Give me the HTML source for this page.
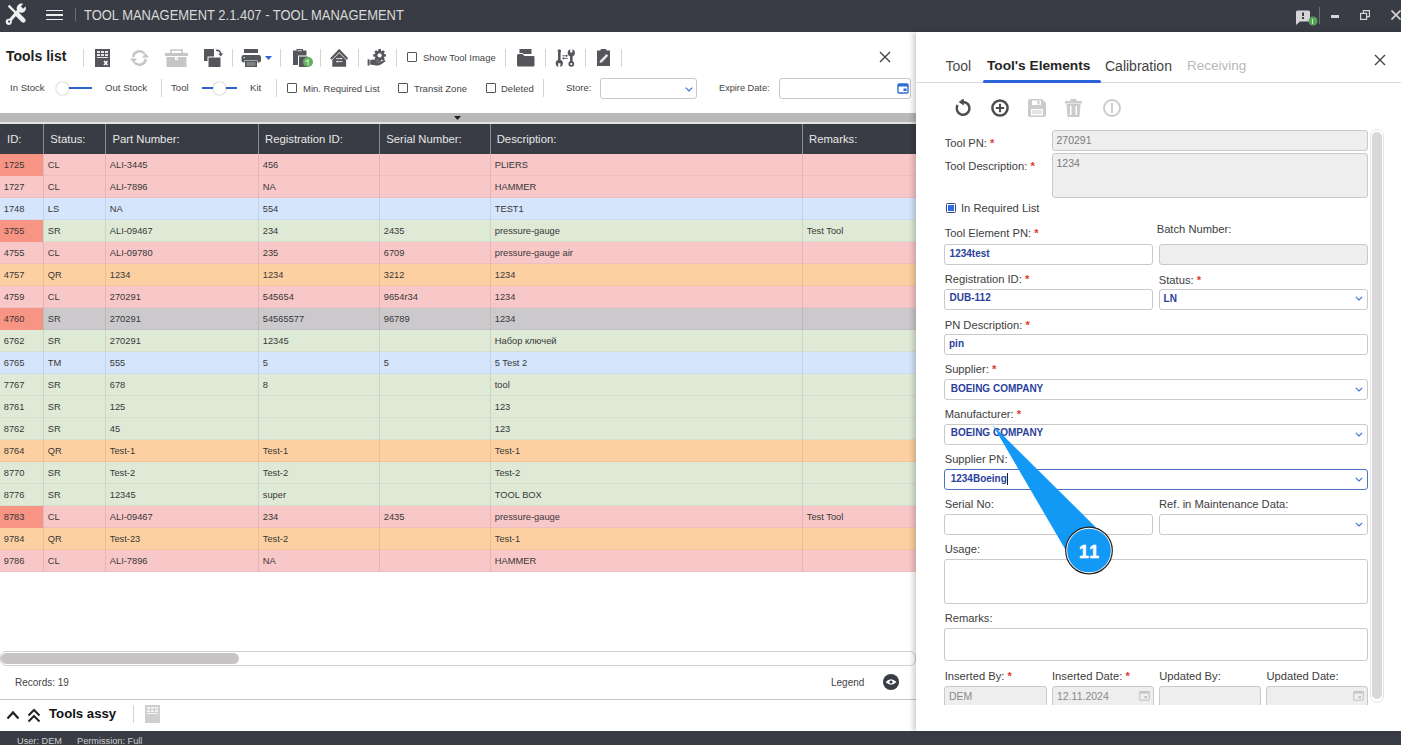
<!DOCTYPE html>
<html><head><meta charset="utf-8">
<style>
*{box-sizing:border-box;margin:0;padding:0}
html,body{width:1401px;height:745px;overflow:hidden;background:#fff;font-family:"Liberation Sans",sans-serif;color:#333}
.a{position:absolute;white-space:nowrap;line-height:1}
#title{position:absolute;left:0;top:0;width:1401px;height:32px;background:#393c44}
#status{position:absolute;left:0;top:731px;width:1401px;height:14px;background:#393c44}
.sep{position:absolute;width:1px;background:#d4d4d4}
.cb{position:absolute;width:10px;height:10px;border:1px solid #555;border-radius:1px;background:#fff}
/* table */
#grid{position:absolute;left:0;top:124px;width:916px}
.hdr{position:absolute;left:0;top:0;width:916px;height:30px;background:#393c44}
.hc{position:absolute;top:0;height:30px;line-height:30px;color:#e8e8e8;font-size:11.3px;padding-left:7px}
.hs{position:absolute;top:0;width:1px;height:30px;background:#8a8d93}
.row{position:absolute;left:0;width:916px;height:22px;border-bottom:1px solid rgba(0,0,0,0.04)}
.c{position:absolute;top:0;height:22px;line-height:22px;font-size:9.8px;color:#383838;padding-left:5px;white-space:nowrap;transform:scaleX(0.95);transform-origin:0 0}
.vs{position:absolute;top:0;width:1px;height:22px;background:rgba(0,0,0,0.08)}
.pk{background:#f8c7c7}.bl{background:#d5e5fb}.gr{background:#dee9d6}.or{background:#fdd0a1}.gy{background:#cbc9cc}
.sal{background:#f79484}
/* panel */
#panel{position:absolute;left:916px;top:32px;width:485px;height:699px;background:#fff;box-shadow:-3px 0 5px rgba(0,0,0,0.18)}
.lbl{position:absolute;font-size:11px;color:#3a3a3a;white-space:nowrap;line-height:1}
.req{color:#e03a2a;font-weight:bold}
.inp{position:absolute;height:20px;border:1px solid #c6c6c6;border-radius:3px;background:#fff}
.dis{background:#eeeeee}
.val{position:absolute;font-size:10px;font-weight:bold;color:#2b3f9c;white-space:nowrap;line-height:1}
.chev{position:absolute;width:8px;height:5px}
</style></head><body>

<!-- TITLE BAR -->
<div id="title">
  <svg class="a" style="left:0;top:0" width="32" height="32" viewBox="0 0 32 32">
    <path d="M8.6 5.6 L15.5 12.5" stroke="#f0f0f0" stroke-width="2.4" stroke-linecap="butt"/>
    <path d="M16.5 13.5 L23.3 20.3" stroke="#f0f0f0" stroke-width="4.6" stroke-linecap="round"/>
    <path d="M9 21.5 L19.5 9.5" stroke="#f0f0f0" stroke-width="3.2"/>
    <circle cx="8.8" cy="21.8" r="3.1" fill="#f0f0f0"/>
    <circle cx="9.1" cy="21.6" r="1.1" fill="#393c44"/>
    <circle cx="21.3" cy="8.2" r="4.6" fill="#f0f0f0"/>
    <path d="M22 7.5 L26.5 3" stroke="#393c44" stroke-width="3.2"/>
  </svg>
  <div class="a" style="left:46px;top:9.5px;width:17px;height:1.6px;background:#eee"></div>
  <div class="a" style="left:46px;top:14px;width:17px;height:1.6px;background:#eee"></div>
  <div class="a" style="left:46px;top:18.6px;width:17px;height:1.6px;background:#eee"></div>
  <div class="a" style="left:75px;top:8px;width:1px;height:13px;background:#6a6d73"></div>
  <div class="a" style="left:84px;top:8.1px;font-size:14.2px;color:#d8d8d8;transform:scaleX(0.913);transform-origin:0 0">TOOL MANAGEMENT 2.1.407 - TOOL MANAGEMENT</div>
  <!-- right icons -->
  <svg class="a" style="left:1295px;top:9px" width="24" height="18" viewBox="0 0 24 18">
    <path d="M2.5 1.5 h11 q1.5 0 1.5 1.5 v8 q0 1.5 -1.5 1.5 h-8.5 l-4 3.5 v-13 q0 -1.5 1.5 -1.5 z" fill="#d8d3d6"/>
    <rect x="7" y="3.5" width="2" height="3.5" fill="#393c44"/><rect x="7" y="8" width="2" height="2" fill="#393c44"/>
    <circle cx="18" cy="12" r="4.5" fill="#57a457"/>
    <path d="M17.5 10 v5" stroke="#c9e7c9" stroke-width="1"/>
  </svg>
  <div class="a" style="left:1319px;top:7px;width:1px;height:17px;background:#6a6d73"></div>
  <div class="a" style="left:1331px;top:15px;width:8px;height:2.5px;background:#d6d6d6"></div>
  <svg class="a" style="left:1360px;top:10px" width="10" height="10" viewBox="0 0 10 10">
    <rect x="0.6" y="3.4" width="6" height="6" fill="none" stroke="#d6d6d6" stroke-width="1.2"/>
    <path d="M3.4 3.4 V0.6 H9.4 V6.6 H6.6" fill="none" stroke="#d6d6d6" stroke-width="1.2"/>
  </svg>
  <svg class="a" style="left:1391px;top:10px" width="10" height="10" viewBox="0 0 10 10">
    <path d="M0.5 0.5 L9.5 9.5 M9.5 0.5 L0.5 9.5" stroke="#d6d6d6" stroke-width="1.6"/>
  </svg>
</div>

<!-- TOOLBAR -->
<div class="a" style="left:6px;top:49px;font-size:14px;font-weight:bold;color:#222">Tools list</div>
<div class="sep" style="left:83px;top:49px;height:18px"></div>


<!-- toolbar row1 icons -->
<svg class="a" style="left:95px;top:49px" width="15" height="18" viewBox="0 0 15 18">
  <rect x="0" y="0" width="15" height="18" fill="#55565c"/>
  <g fill="#e6e6e8"><rect x="2" y="2" width="3" height="2"/><rect x="6" y="2" width="3" height="2"/><rect x="10" y="2" width="3" height="2"/>
  <rect x="2" y="5" width="3" height="2"/><rect x="6" y="5" width="3" height="2"/><rect x="10" y="5" width="3" height="2"/>
  <rect x="2" y="8" width="11" height="1"/></g>
  <path d="M9 12 L12.5 16 M12.5 12 L9 16" stroke="#fff" stroke-width="1.5"/>
</svg>
<svg class="a" style="left:129px;top:49px" width="21" height="18" viewBox="0 0 21 18">
  <path d="M4.2 8 A6.5 6.5 0 0 1 15.5 4.5" fill="none" stroke="#c6c6c8" stroke-width="2.6"/>
  <path d="M16.8 10 A6.5 6.5 0 0 1 5.5 13.5" fill="none" stroke="#c6c6c8" stroke-width="2.6"/>
  <path d="M13 8.5 L20 8.5 L16.5 4 Z" fill="#c6c6c8"/>
  <path d="M8 9.5 L1 9.5 L4.5 14 Z" fill="#c6c6c8"/>
</svg>
<svg class="a" style="left:165px;top:49px" width="23" height="18" viewBox="0 0 23 18">
  <path d="M6 4 V1 H17 V4" fill="none" stroke="#c6c6c8" stroke-width="1.6"/>
  <rect x="0" y="4" width="23" height="3" fill="#c6c6c8"/>
  <rect x="1.5" y="8" width="20" height="10" fill="#c6c6c8"/>
  <rect x="10" y="8" width="3" height="3" fill="#fff"/>
  <rect x="11" y="9" width="1" height="1" fill="#c6c6c8"/>
</svg>
<svg class="a" style="left:204px;top:49px" width="20" height="18" viewBox="0 0 20 18">
  <rect x="0" y="0" width="10" height="12" fill="#55565c"/>
  <rect x="3.5" y="7.5" width="13" height="10.5" fill="#fff"/>
  <rect x="4.5" y="8.5" width="12" height="9.5" fill="#55565c"/>
  <path d="M12 1.2 Q16.5 1.2 16.8 5" fill="none" stroke="#55565c" stroke-width="1.5"/>
  <path d="M14.2 4.5 L19.2 4.5 L16.7 7.5 Z" fill="#55565c"/>
</svg>
<div class="sep" style="left:232px;top:49px;height:18px"></div>
<svg class="a" style="left:241px;top:49px" width="21" height="18" viewBox="0 0 21 18">
  <rect x="3" y="0" width="14" height="4" fill="#55565c"/>
  <rect x="0.5" y="6" width="19.5" height="7.5" rx="2.2" fill="#55565c"/>
  <rect x="2.5" y="8" width="1.5" height="1.2" fill="#ddd"/>
  <rect x="3.5" y="11.5" width="13" height="6.5" fill="#fff"/>
  <rect x="4" y="12" width="12" height="6" fill="#55565c"/>
  <rect x="5.5" y="13.5" width="9" height="1" fill="#aaa"/>
  <rect x="5.5" y="15.5" width="9" height="1" fill="#aaa"/>
</svg>
<svg class="a" style="left:265px;top:56px" width="7" height="4" viewBox="0 0 7 4"><path d="M0 0 H7 L3.5 4 Z" fill="#2d62d2"/></svg>
<div class="sep" style="left:280px;top:49px;height:18px"></div>
<svg class="a" style="left:292px;top:49px" width="22" height="18" viewBox="0 0 22 18">
  <rect x="1" y="1.5" width="13.5" height="14.5" fill="#55565c"/>
  <rect x="4.5" y="0" width="6.5" height="3" fill="#55565c"/>
  <rect x="5.5" y="1" width="4.5" height="1.2" fill="#bbb"/>
  <rect x="6" y="6.5" width="10" height="11.5" fill="#fff"/>
  <rect x="7" y="7.5" width="9" height="10.5" fill="#55565c"/>
  <circle cx="16" cy="13" r="5" fill="#63b063"/>
  <path d="M13 12 H17 M16 10 V16" stroke="#d6efd6" stroke-width="1"/>
</svg>
<div class="sep" style="left:320px;top:49px;height:18px"></div>
<svg class="a" style="left:330px;top:49px" width="19" height="18" viewBox="0 0 19 18">
  <path d="M1 10 L9.2 1.4 L17.4 10" fill="none" stroke="#55565c" stroke-width="2.2" stroke-linejoin="miter"/>
  <path d="M2.3 11 L9.2 3.9 L16.1 11 V17.8 H2.3 Z" fill="#55565c"/>
  <path d="M6 9.6 H12 M6.5 12.6 H12.5" stroke="#e8e8e8" stroke-width="0.9"/>
  <path d="M10.8 8.4 L12.6 9.6 L10.8 10.8 Z M7.7 11.4 L5.9 12.6 L7.7 13.8 Z" fill="#e8e8e8"/>
</svg>
<div class="sep" style="left:358px;top:49px;height:18px"></div>
<svg class="a" style="left:367px;top:49px" width="20" height="18" viewBox="0 0 20 18">
  <g transform="translate(12.6,6.4)">
    <circle r="4.7" fill="#55565c"/>
    <g fill="#55565c"><rect x="-1.4" y="-6.3" width="2.8" height="12.6" rx="0.6"/><rect x="-6.3" y="-1.4" width="12.6" height="2.8" rx="0.6"/>
    <rect x="-1.4" y="-6.3" width="2.8" height="12.6" rx="0.6" transform="rotate(45)"/><rect x="-1.4" y="-6.3" width="2.8" height="12.6" rx="0.6" transform="rotate(-45)"/></g>
    <circle r="2.1" fill="#fff"/>
  </g>
  <rect x="0.6" y="10.3" width="2" height="6.2" fill="#55565c"/>
  <path d="M3.2 11.2 Q6 10 9 11.2 L11.8 11.6 Q12.8 12.6 11.6 13.2 L8 13.4 L11.8 13.6 L16.2 11.4 Q18.8 10.6 18.6 12.3 L13.4 15.8 Q11.4 16.8 9.3 16.4 L3.2 15.6 Z" fill="#55565c"/>
</svg>
<div class="sep" style="left:396px;top:49px;height:18px"></div>
<div class="cb" style="left:407px;top:52px"></div>
<div class="a" style="left:423px;top:52.5px;font-size:9.5px;color:#444">Show Tool Image</div>
<div class="sep" style="left:505px;top:49px;height:18px"></div>
<svg class="a" style="left:517px;top:49px" width="18" height="18" viewBox="0 0 18 18">
  <rect x="2.5" y="0" width="12" height="5" fill="#55565c"/>
  <path d="M0 5.5 Q0 4 1.5 4 H5.5 L7.5 6 H16.5 Q17.5 6 17.5 7 V16 Q17.5 17.5 16 17.5 H1.5 Q0 17.5 0 16 Z" fill="#fff"/>
  <path d="M0 6.5 Q0 5 1.5 5 H5.5 L7.5 7 H16.5 Q17.5 7 17.5 8 V16 Q17.5 17.5 16 17.5 H1.5 Q0 17.5 0 16 Z" fill="#55565c"/>
</svg>
<div class="sep" style="left:545px;top:49px;height:18px"></div>
<svg class="a" style="left:553px;top:47px" width="24" height="22" viewBox="553 47 24 22">
  <rect x="558" y="50.5" width="2.6" height="11" fill="#55565c"/>
  <circle cx="559.3" cy="51" r="1.7" fill="#55565c"/>
  <circle cx="559.3" cy="63.3" r="3.6" fill="#55565c"/>
  <rect x="558.2" y="63.2" width="2.2" height="5" fill="#fff"/>
  <rect x="570" y="52.5" width="2.6" height="10" fill="#55565c"/>
  <circle cx="571.3" cy="52.8" r="3.6" fill="#55565c"/>
  <rect x="570.2" y="47.5" width="2.2" height="5" fill="#fff"/>
  <circle cx="571.3" cy="63.8" r="2.9" fill="#55565c"/>
  <circle cx="571.3" cy="64" r="1.1" fill="#fff"/>
  <path d="M562.3 55.8 H567.3 M562.7 58.4 H567.7" stroke="#55565c" stroke-width="0.9"/>
  <path d="M566 54.5 L568 55.8 L566 57.1 Z M564 57.1 L562 58.4 L564 59.7 Z" fill="#55565c"/>
</svg>
<div class="sep" style="left:585px;top:49px;height:18px"></div>
<svg class="a" style="left:597px;top:49px" width="14" height="18" viewBox="0 0 14 18">
  <rect x="0" y="1.5" width="13" height="15.5" fill="#55565c"/>
  <rect x="3.5" y="0" width="6" height="2.5" rx="1" fill="#55565c"/>
  <path d="M2.5 14 L3.2 11.5 L9.5 5 L11.2 6.7 L5 13.2 Z" fill="#e8e8e8"/>
</svg>
<div class="sep" style="left:621px;top:49px;height:18px"></div>


<!-- row 2 -->
<div class="a" style="left:10px;top:83px;font-size:9.6px;color:#444">In Stock</div>
<div class="a" style="left:62px;top:87px;width:30px;height:2px;background:#2f63d0"></div>
<div class="a" style="left:56px;top:82px;width:13px;height:13px;border-radius:50%;background:#fff;box-shadow:0 0 1.5px rgba(0,0,0,0.45)"></div>
<div class="a" style="left:105px;top:83px;font-size:9.6px;color:#444">Out Stock</div>
<div class="sep" style="left:161px;top:79px;height:18px"></div>
<div class="a" style="left:171px;top:83px;font-size:9.6px;color:#444">Tool</div>
<div class="a" style="left:202px;top:87px;width:35px;height:2px;background:#2f63d0"></div>
<div class="a" style="left:213px;top:82px;width:13px;height:13px;border-radius:50%;background:#fff;box-shadow:0 0 1.5px rgba(0,0,0,0.45)"></div>
<div class="a" style="left:250px;top:83px;font-size:9.6px;color:#444">Kit</div>
<div class="sep" style="left:276px;top:79px;height:18px"></div>
<div class="cb" style="left:287px;top:83px"></div>
<div class="a" style="left:303px;top:84px;font-size:9.5px;color:#444">Min. Required List</div>
<div class="cb" style="left:398px;top:83px"></div>
<div class="a" style="left:414px;top:84px;font-size:9.5px;color:#444">Transit Zone</div>
<div class="cb" style="left:486px;top:83px"></div>
<div class="a" style="left:501px;top:84px;font-size:9.5px;color:#444">Deleted</div>
<div class="sep" style="left:543px;top:79px;height:18px"></div>
<div class="a" style="left:566px;top:83px;font-size:9.5px;color:#444">Store:</div>
<div class="inp" style="left:600px;top:78px;width:97px;height:21px;border-color:#c8c8c8"></div>
<svg class="chev" style="left:685px;top:87px" viewBox="0 0 8 5"><path d="M0.7 0.7 L4 4 L7.3 0.7" fill="none" stroke="#3b6fd6" stroke-width="1.1"/></svg>
<div class="a" style="left:719px;top:84px;font-size:9.2px;color:#444">Expire Date:</div>
<div class="inp" style="left:779px;top:78px;width:132px;height:21px;border-color:#c8c8c8"></div>
<svg class="a" style="left:897px;top:82px" width="12" height="12" viewBox="0 0 12 12">
  <rect x="1" y="2" width="10" height="9" rx="1" fill="none" stroke="#2f6bd6" stroke-width="1.4"/>
  <rect x="1" y="2" width="10" height="2.5" fill="#2f6bd6"/>
  <rect x="6.5" y="6.5" width="3" height="2.5" fill="#2f6bd6"/>
</svg>
<svg class="a" style="left:879px;top:51px" width="12" height="12" viewBox="0 0 12 12">
  <path d="M1 1 L11 11 M11 1 L1 11" stroke="#444" stroke-width="1.4"/>
</svg>

<!-- grey bar -->
<div class="a" style="left:0;top:113px;width:916px;height:9px;background:#b9b9ba"></div>
<div class="a" style="left:0;top:122px;width:916px;height:2px;background:#e4e4e4"></div>
<svg class="a" style="left:454px;top:116px" width="7" height="4" viewBox="0 0 7 4"><path d="M0 0 H7 L3.5 4 Z" fill="#222"/></svg>

<div id="grid"><div class="hdr"><div class="hc" style="left:0px">ID:</div><div class="hc" style="left:43.3px">Status:</div><div class="hs" style="left:43.3px"></div><div class="hc" style="left:105.4px">Part Number:</div><div class="hs" style="left:105.4px"></div><div class="hc" style="left:258px">Registration ID:</div><div class="hs" style="left:258px"></div><div class="hc" style="left:379.3px">Serial Number:</div><div class="hs" style="left:379.3px"></div><div class="hc" style="left:489.7px">Description:</div><div class="hs" style="left:489.7px"></div><div class="hc" style="left:802px">Remarks:</div><div class="hs" style="left:802px"></div></div><div class="row pk" style="top:30px"><div class="a sal" style="left:0;top:0;width:43px;height:22px"></div><div class="c" style="left:-1px">1725</div><div class="vs" style="left:43.3px"></div><div class="c" style="left:43.3px">CL</div><div class="vs" style="left:105.4px"></div><div class="c" style="left:105.4px">ALI-3445</div><div class="vs" style="left:258px"></div><div class="c" style="left:258px">456</div><div class="vs" style="left:379.3px"></div><div class="vs" style="left:489.7px"></div><div class="c" style="left:489.7px">PLIERS</div><div class="vs" style="left:802px"></div></div><div class="row pk" style="top:52px"><div class="c" style="left:-1px">1727</div><div class="vs" style="left:43.3px"></div><div class="c" style="left:43.3px">CL</div><div class="vs" style="left:105.4px"></div><div class="c" style="left:105.4px">ALI-7896</div><div class="vs" style="left:258px"></div><div class="c" style="left:258px">NA</div><div class="vs" style="left:379.3px"></div><div class="vs" style="left:489.7px"></div><div class="c" style="left:489.7px">HAMMER</div><div class="vs" style="left:802px"></div></div><div class="row bl" style="top:74px"><div class="c" style="left:-1px">1748</div><div class="vs" style="left:43.3px"></div><div class="c" style="left:43.3px">LS</div><div class="vs" style="left:105.4px"></div><div class="c" style="left:105.4px">NA</div><div class="vs" style="left:258px"></div><div class="c" style="left:258px">554</div><div class="vs" style="left:379.3px"></div><div class="vs" style="left:489.7px"></div><div class="c" style="left:489.7px">TEST1</div><div class="vs" style="left:802px"></div></div><div class="row gr" style="top:96px"><div class="a sal" style="left:0;top:0;width:43px;height:22px"></div><div class="c" style="left:-1px">3755</div><div class="vs" style="left:43.3px"></div><div class="c" style="left:43.3px">SR</div><div class="vs" style="left:105.4px"></div><div class="c" style="left:105.4px">ALI-09467</div><div class="vs" style="left:258px"></div><div class="c" style="left:258px">234</div><div class="vs" style="left:379.3px"></div><div class="c" style="left:379.3px">2435</div><div class="vs" style="left:489.7px"></div><div class="c" style="left:489.7px">pressure-gauge</div><div class="vs" style="left:802px"></div><div class="c" style="left:802px">Test Tool</div></div><div class="row pk" style="top:118px"><div class="c" style="left:-1px">4755</div><div class="vs" style="left:43.3px"></div><div class="c" style="left:43.3px">CL</div><div class="vs" style="left:105.4px"></div><div class="c" style="left:105.4px">ALI-09780</div><div class="vs" style="left:258px"></div><div class="c" style="left:258px">235</div><div class="vs" style="left:379.3px"></div><div class="c" style="left:379.3px">6709</div><div class="vs" style="left:489.7px"></div><div class="c" style="left:489.7px">pressure-gauge air</div><div class="vs" style="left:802px"></div></div><div class="row or" style="top:140px"><div class="c" style="left:-1px">4757</div><div class="vs" style="left:43.3px"></div><div class="c" style="left:43.3px">QR</div><div class="vs" style="left:105.4px"></div><div class="c" style="left:105.4px">1234</div><div class="vs" style="left:258px"></div><div class="c" style="left:258px">1234</div><div class="vs" style="left:379.3px"></div><div class="c" style="left:379.3px">3212</div><div class="vs" style="left:489.7px"></div><div class="c" style="left:489.7px">1234</div><div class="vs" style="left:802px"></div></div><div class="row pk" style="top:162px"><div class="c" style="left:-1px">4759</div><div class="vs" style="left:43.3px"></div><div class="c" style="left:43.3px">CL</div><div class="vs" style="left:105.4px"></div><div class="c" style="left:105.4px">270291</div><div class="vs" style="left:258px"></div><div class="c" style="left:258px">545654</div><div class="vs" style="left:379.3px"></div><div class="c" style="left:379.3px">9654r34</div><div class="vs" style="left:489.7px"></div><div class="c" style="left:489.7px">1234</div><div class="vs" style="left:802px"></div></div><div class="row gy" style="top:184px"><div class="a sal" style="left:0;top:0;width:43px;height:22px"></div><div class="c" style="left:-1px">4760</div><div class="vs" style="left:43.3px"></div><div class="c" style="left:43.3px">SR</div><div class="vs" style="left:105.4px"></div><div class="c" style="left:105.4px">270291</div><div class="vs" style="left:258px"></div><div class="c" style="left:258px">54565577</div><div class="vs" style="left:379.3px"></div><div class="c" style="left:379.3px">96789</div><div class="vs" style="left:489.7px"></div><div class="c" style="left:489.7px">1234</div><div class="vs" style="left:802px"></div></div><div class="row gr" style="top:206px"><div class="c" style="left:-1px">6762</div><div class="vs" style="left:43.3px"></div><div class="c" style="left:43.3px">SR</div><div class="vs" style="left:105.4px"></div><div class="c" style="left:105.4px">270291</div><div class="vs" style="left:258px"></div><div class="c" style="left:258px">12345</div><div class="vs" style="left:379.3px"></div><div class="vs" style="left:489.7px"></div><div class="c" style="left:489.7px">Набор ключей</div><div class="vs" style="left:802px"></div></div><div class="row bl" style="top:228px"><div class="c" style="left:-1px">6765</div><div class="vs" style="left:43.3px"></div><div class="c" style="left:43.3px">TM</div><div class="vs" style="left:105.4px"></div><div class="c" style="left:105.4px">555</div><div class="vs" style="left:258px"></div><div class="c" style="left:258px">5</div><div class="vs" style="left:379.3px"></div><div class="c" style="left:379.3px">5</div><div class="vs" style="left:489.7px"></div><div class="c" style="left:489.7px">5 Test 2</div><div class="vs" style="left:802px"></div></div><div class="row gr" style="top:250px"><div class="c" style="left:-1px">7767</div><div class="vs" style="left:43.3px"></div><div class="c" style="left:43.3px">SR</div><div class="vs" style="left:105.4px"></div><div class="c" style="left:105.4px">678</div><div class="vs" style="left:258px"></div><div class="c" style="left:258px">8</div><div class="vs" style="left:379.3px"></div><div class="vs" style="left:489.7px"></div><div class="c" style="left:489.7px">tool</div><div class="vs" style="left:802px"></div></div><div class="row gr" style="top:272px"><div class="c" style="left:-1px">8761</div><div class="vs" style="left:43.3px"></div><div class="c" style="left:43.3px">SR</div><div class="vs" style="left:105.4px"></div><div class="c" style="left:105.4px">125</div><div class="vs" style="left:258px"></div><div class="vs" style="left:379.3px"></div><div class="vs" style="left:489.7px"></div><div class="c" style="left:489.7px">123</div><div class="vs" style="left:802px"></div></div><div class="row gr" style="top:294px"><div class="c" style="left:-1px">8762</div><div class="vs" style="left:43.3px"></div><div class="c" style="left:43.3px">SR</div><div class="vs" style="left:105.4px"></div><div class="c" style="left:105.4px">45</div><div class="vs" style="left:258px"></div><div class="vs" style="left:379.3px"></div><div class="vs" style="left:489.7px"></div><div class="c" style="left:489.7px">123</div><div class="vs" style="left:802px"></div></div><div class="row or" style="top:316px"><div class="c" style="left:-1px">8764</div><div class="vs" style="left:43.3px"></div><div class="c" style="left:43.3px">QR</div><div class="vs" style="left:105.4px"></div><div class="c" style="left:105.4px">Test-1</div><div class="vs" style="left:258px"></div><div class="c" style="left:258px">Test-1</div><div class="vs" style="left:379.3px"></div><div class="vs" style="left:489.7px"></div><div class="c" style="left:489.7px">Test-1</div><div class="vs" style="left:802px"></div></div><div class="row gr" style="top:338px"><div class="c" style="left:-1px">8770</div><div class="vs" style="left:43.3px"></div><div class="c" style="left:43.3px">SR</div><div class="vs" style="left:105.4px"></div><div class="c" style="left:105.4px">Test-2</div><div class="vs" style="left:258px"></div><div class="c" style="left:258px">Test-2</div><div class="vs" style="left:379.3px"></div><div class="vs" style="left:489.7px"></div><div class="c" style="left:489.7px">Test-2</div><div class="vs" style="left:802px"></div></div><div class="row gr" style="top:360px"><div class="c" style="left:-1px">8776</div><div class="vs" style="left:43.3px"></div><div class="c" style="left:43.3px">SR</div><div class="vs" style="left:105.4px"></div><div class="c" style="left:105.4px">12345</div><div class="vs" style="left:258px"></div><div class="c" style="left:258px">super</div><div class="vs" style="left:379.3px"></div><div class="vs" style="left:489.7px"></div><div class="c" style="left:489.7px">TOOL BOX</div><div class="vs" style="left:802px"></div></div><div class="row pk" style="top:382px"><div class="a sal" style="left:0;top:0;width:43px;height:22px"></div><div class="c" style="left:-1px">8783</div><div class="vs" style="left:43.3px"></div><div class="c" style="left:43.3px">CL</div><div class="vs" style="left:105.4px"></div><div class="c" style="left:105.4px">ALI-09467</div><div class="vs" style="left:258px"></div><div class="c" style="left:258px">234</div><div class="vs" style="left:379.3px"></div><div class="c" style="left:379.3px">2435</div><div class="vs" style="left:489.7px"></div><div class="c" style="left:489.7px">pressure-gauge</div><div class="vs" style="left:802px"></div><div class="c" style="left:802px">Test Tool</div></div><div class="row or" style="top:404px"><div class="c" style="left:-1px">9784</div><div class="vs" style="left:43.3px"></div><div class="c" style="left:43.3px">QR</div><div class="vs" style="left:105.4px"></div><div class="c" style="left:105.4px">Test-23</div><div class="vs" style="left:258px"></div><div class="c" style="left:258px">Test-2</div><div class="vs" style="left:379.3px"></div><div class="vs" style="left:489.7px"></div><div class="c" style="left:489.7px">Test-1</div><div class="vs" style="left:802px"></div></div><div class="row pk" style="top:426px"><div class="c" style="left:-1px">9786</div><div class="vs" style="left:43.3px"></div><div class="c" style="left:43.3px">CL</div><div class="vs" style="left:105.4px"></div><div class="c" style="left:105.4px">ALI-7896</div><div class="vs" style="left:258px"></div><div class="c" style="left:258px">NA</div><div class="vs" style="left:379.3px"></div><div class="vs" style="left:489.7px"></div><div class="c" style="left:489.7px">HAMMER</div><div class="vs" style="left:802px"></div></div></div>

<!-- bottom left -->
<div class="a" style="left:0;top:651px;width:916px;height:15px;border:1px solid #d0d0d0;border-radius:6px;background:#fff"></div>
<div class="a" style="left:1px;top:653px;width:238px;height:11px;border-radius:6px;background:#c8c3c4"></div>
<div class="a" style="left:15px;top:678px;font-size:10px;color:#444">Records: 19</div>
<div class="a" style="left:831px;top:678px;font-size:10px;color:#444">Legend</div>
<div class="a" style="left:883px;top:674px;width:16px;height:16px;border-radius:50%;background:#393c44"></div>
<svg class="a" style="left:885px;top:678px" width="12" height="8" viewBox="0 0 12 8"><path d="M0.5 4 Q6 -1.5 11.5 4 Q6 9.5 0.5 4Z" fill="#fff"/><circle cx="6" cy="4" r="1.6" fill="#393c44"/></svg>
<div class="a" style="left:0;top:699px;width:916px;height:1px;background:#c4c4c4"></div>
<svg class="a" style="left:6px;top:710px" width="14" height="10" viewBox="0 0 14 10"><path d="M1.5 8.5 L7 2.5 L12.5 8.5" fill="none" stroke="#222" stroke-width="2.2"/></svg>
<svg class="a" style="left:27px;top:708px" width="14" height="15" viewBox="0 0 14 15"><path d="M1.5 7.5 L7 2 L12.5 7.5 M1.5 13.5 L7 8 L12.5 13.5" fill="none" stroke="#222" stroke-width="2"/></svg>
<div class="a" style="left:49px;top:707px;font-size:13.2px;font-weight:bold;color:#111">Tools assy</div>
<div class="sep" style="left:133px;top:705px;height:18px"></div>
<svg class="a" style="left:145px;top:705px" width="16" height="18" viewBox="0 0 16 18">
  <rect x="0" y="0" width="15" height="18" fill="#cfcfd1"/>
  <g fill="#f2f2f2"><rect x="2" y="2" width="3" height="2"/><rect x="6" y="2" width="3" height="2"/><rect x="10" y="2" width="3" height="2"/><rect x="2" y="5" width="3" height="2"/><rect x="6" y="5" width="3" height="2"/><rect x="10" y="5" width="3" height="2"/><rect x="2" y="8" width="11" height="1"/></g>
</svg>

<div id="status">
  <div class="a" style="left:17px;font-size:9.2px;color:#cfcfcf;position:absolute;top:6px">User: DEM</div>
  <div class="a" style="left:77px;top:6px;font-size:9.2px;color:#cfcfcf;position:absolute">Permission: Full</div>
</div>

<div id="panel"></div>
<div class="a" style="left:945.5px;top:58.8px;font-size:14px;color:#4a4a4a">Tool</div>
<div class="a" style="left:987px;top:59px;font-size:13.7px;font-weight:bold;color:#262626">Tool's Elements</div>
<div class="a" style="left:1105px;top:58.8px;font-size:14px;color:#3f3f3f">Calibration</div>
<div class="a" style="left:1187px;top:59px;font-size:13.5px;color:#b8b8b8">Receiving</div>
<div class="a" style="left:916px;top:82px;width:485px;height:1px;background:#d9d9d9"></div>
<div class="a" style="left:983px;top:80px;width:118px;height:3px;border-radius:2px;background:#2b63d9"></div>
<svg class="a" style="left:1374px;top:54px" width="12" height="12" viewBox="0 0 12 12"><path d="M1 1 L11 11 M11 1 L1 11" stroke="#444" stroke-width="1.4"/></svg>
<svg class="a" style="left:954px;top:99px" width="18" height="18" viewBox="0 0 18 18">
 <path d="M3.6 6 A6.4 6.4 0 1 0 9 2.9" fill="none" stroke="#4d4d4f" stroke-width="2.5"/>
 <path d="M9.8 -0.6 L9.8 6.6 L4.6 3 Z" fill="#4d4d4f"/>
</svg>
<svg class="a" style="left:991px;top:99px" width="18" height="18" viewBox="0 0 18 18">
 <circle cx="9" cy="9" r="7.6" fill="none" stroke="#4d4d4f" stroke-width="2.5"/>
 <path d="M9 4.8 V13.2 M4.8 9 H13.2" stroke="#4d4d4f" stroke-width="2.1"/>
</svg>
<svg class="a" style="left:1028px;top:99px" width="18" height="18" viewBox="0 0 18 18">
 <path d="M0 2 Q0 0 2 0 H14 L18 4 V16 Q18 18 16 18 H2 Q0 18 0 16 Z" fill="#cbcbcd"/>
 <rect x="4" y="1.5" width="9" height="4.5" fill="#fff"/><rect x="9.5" y="2" width="2" height="3.5" fill="#cbcbcd"/>
 <rect x="3" y="10" width="12" height="6.5" fill="#fff"/><rect x="4" y="11.5" width="10" height="1" fill="#cbcbcd"/><rect x="4" y="13.5" width="10" height="1" fill="#cbcbcd"/>
</svg>
<svg class="a" style="left:1065px;top:99px" width="17" height="18" viewBox="0 0 17 18">
 <rect x="5.5" y="0" width="6" height="2" fill="#cbcbcd"/>
 <rect x="0" y="2" width="17" height="2.5" fill="#cbcbcd"/>
 <path d="M1.5 5 H15.5 L14.5 18 H2.5 Z" fill="#cbcbcd"/>
 <rect x="5" y="7" width="1.5" height="9" fill="#fff"/><rect x="10.5" y="7" width="1.5" height="9" fill="#fff"/>
</svg>
<svg class="a" style="left:1103px;top:99px" width="18" height="18" viewBox="0 0 18 18">
 <circle cx="9" cy="9" r="8" fill="none" stroke="#c9c9cb" stroke-width="1.8"/>
 <rect x="8.1" y="4" width="1.8" height="10" fill="#c9c9cb"/>
</svg>
<div class="a" style="left:944.7px;top:138.4px;font-size:11.2px;color:#3d3d3d">Tool PN: <span class="req">*</span></div>
<div class="a" style="left:1052px;top:130px;width:316px;height:21px;border:1px solid #c9c9c9;border-radius:3px;background:#eeeeee"></div>
<div class="a" style="left:1056.5px;top:134.9px;font-size:10.5px;font-weight:normal;color:#7b7b7b">270291</div>
<div class="a" style="left:944.7px;top:160.8px;font-size:11.2px;color:#3d3d3d">Tool Description: <span class="req">*</span></div>
<div class="a" style="left:1052px;top:153px;width:316px;height:45px;border:1px solid #c9c9c9;border-radius:3px;background:#eeeeee"></div>
<div class="a" style="left:1056.5px;top:158.0px;font-size:10.5px;font-weight:normal;color:#7b7b7b">1234</div>
<div class="a" style="left:946px;top:203px;width:10px;height:10px;border:1px solid #33427a;border-radius:1.5px;background:#fff;padding:1px"><div style="width:6px;height:6px;background:#2f6ae8"></div></div>
<div class="a" style="left:961px;top:203.1px;font-size:11.2px;color:#3d3d3d">In Required List</div>
<div class="a" style="left:944.7px;top:227.8px;font-size:11.2px;color:#3d3d3d">Tool Element PN: <span class="req">*</span></div>
<div class="a" style="left:1156.7px;top:224.2px;font-size:11.2px;color:#3d3d3d">Batch Number:</div>
<div class="a" style="left:944px;top:244px;width:209px;height:21px;border:1px solid #c9c9c9;border-radius:3px;background:#fff"></div>
<div class="a" style="left:1159px;top:244px;width:209px;height:21px;border:1px solid #c9c9c9;border-radius:3px;background:#eeeeee"></div>
<div class="a" style="left:949.6px;top:248.5px;font-size:10px;font-weight:bold;color:#2b3f9c">1234test</div>
<div class="a" style="left:944.7px;top:274.2px;font-size:11.2px;color:#3d3d3d">Registration ID: <span class="req">*</span></div>
<div class="a" style="left:1158.8px;top:274.6px;font-size:11.2px;color:#3d3d3d">Status: <span class="req">*</span></div>
<div class="a" style="left:944px;top:289px;width:209px;height:21px;border:1px solid #c9c9c9;border-radius:3px;background:#fff"></div>
<div class="a" style="left:1159px;top:289px;width:209px;height:21px;border:1px solid #c9c9c9;border-radius:3px;background:#fff"></div>
<div class="a" style="left:949.6px;top:293.3px;font-size:10px;font-weight:bold;color:#2b3f9c">DUB-112</div>
<div class="a" style="left:1163.6px;top:294.0px;font-size:10px;font-weight:bold;color:#2b3f9c">LN</div>
<svg class="a" style="left:1355px;top:296px" width="8" height="5" viewBox="0 0 8 5"><path d="M0.8 0.8 L4 4 L7.2 0.8" fill="none" stroke="#3b6fd6" stroke-width="1.1"/></svg>
<div class="a" style="left:944.7px;top:319.5px;font-size:11.2px;color:#3d3d3d">PN Description: <span class="req">*</span></div>
<div class="a" style="left:944px;top:334px;width:424px;height:21px;border:1px solid #c9c9c9;border-radius:3px;background:#fff"></div>
<div class="a" style="left:949px;top:338.9px;font-size:10px;font-weight:bold;color:#2b3f9c">pin</div>
<div class="a" style="left:944.7px;top:364.0px;font-size:11.2px;color:#3d3d3d">Supplier: <span class="req">*</span></div>
<div class="a" style="left:944px;top:379px;width:424px;height:21px;border:1px solid #c9c9c9;border-radius:3px;background:#fff"></div>
<div class="a" style="left:950.7px;top:383.6px;font-size:10px;font-weight:bold;color:#2b3f9c">BOEING COMPANY</div>
<svg class="a" style="left:1355px;top:387px" width="8" height="5" viewBox="0 0 8 5"><path d="M0.8 0.8 L4 4 L7.2 0.8" fill="none" stroke="#3b6fd6" stroke-width="1.1"/></svg>
<div class="a" style="left:944.7px;top:408.7px;font-size:11.2px;color:#3d3d3d">Manufacturer: <span class="req">*</span></div>
<div class="a" style="left:944px;top:424px;width:424px;height:21px;border:1px solid #c9c9c9;border-radius:3px;background:#fff"></div>
<div class="a" style="left:950.7px;top:428.3px;font-size:10px;font-weight:bold;color:#2b3f9c">BOEING COMPANY</div>
<svg class="a" style="left:1355px;top:432px" width="8" height="5" viewBox="0 0 8 5"><path d="M0.8 0.8 L4 4 L7.2 0.8" fill="none" stroke="#3b6fd6" stroke-width="1.1"/></svg>
<div class="a" style="left:944.7px;top:453.7px;font-size:11.2px;color:#3d3d3d">Supplier PN:</div>
<div class="a" style="left:944px;top:469px;width:424px;height:21px;border:1px solid #4f73c4;border-radius:3px;background:#fff"></div>
<div class="a" style="left:950.7px;top:473.5px;font-size:10px;font-weight:bold;color:#2b3f9c">1234Boeing</div>
<div class="a" style="left:1007px;top:473px;width:1px;height:12px;background:#222"></div>
<svg class="a" style="left:1355px;top:477px" width="8" height="5" viewBox="0 0 8 5"><path d="M0.8 0.8 L4 4 L7.2 0.8" fill="none" stroke="#3b6fd6" stroke-width="1.1"/></svg>
<div class="a" style="left:944.7px;top:499.0px;font-size:11.2px;color:#3d3d3d">Serial No:</div>
<div class="a" style="left:1159px;top:499.0px;font-size:11.2px;color:#3d3d3d">Ref. in Maintenance Data:</div>
<div class="a" style="left:944px;top:514px;width:209px;height:21px;border:1px solid #c9c9c9;border-radius:3px;background:#fff"></div>
<div class="a" style="left:1159px;top:514px;width:209px;height:21px;border:1px solid #c9c9c9;border-radius:3px;background:#fff"></div>
<svg class="a" style="left:1355px;top:522px" width="8" height="5" viewBox="0 0 8 5"><path d="M0.8 0.8 L4 4 L7.2 0.8" fill="none" stroke="#3b6fd6" stroke-width="1.1"/></svg>
<div class="a" style="left:944.7px;top:544.2px;font-size:11.2px;color:#3d3d3d">Usage:</div>
<div class="a" style="left:944px;top:559px;width:424px;height:45px;border:1px solid #c9c9c9;border-radius:3px;background:#fff"></div>
<div class="a" style="left:944.7px;top:613.0px;font-size:11.2px;color:#3d3d3d">Remarks:</div>
<div class="a" style="left:944px;top:628px;width:424px;height:33px;border:1px solid #c9c9c9;border-radius:3px;background:#fff"></div>
<div class="a" style="left:944.7px;top:670.7px;font-size:11.2px;color:#3d3d3d">Inserted By: <span class="req">*</span></div>
<div class="a" style="left:1052px;top:670.7px;font-size:11.2px;color:#3d3d3d">Inserted Date: <span class="req">*</span></div>
<div class="a" style="left:1159.2px;top:670.7px;font-size:11.2px;color:#3d3d3d">Updated By:</div>
<div class="a" style="left:1266.4px;top:670.7px;font-size:11.2px;color:#3d3d3d">Updated Date:</div>
<div class="a" style="left:944px;top:686px;width:103px;height:26px;border:1px solid #c9c9c9;border-radius:3px;background:#eeeeee"></div>
<div class="a" style="left:1052px;top:686px;width:102px;height:26px;border:1px solid #c9c9c9;border-radius:3px;background:#eeeeee"></div>
<div class="a" style="left:1159px;top:686px;width:102px;height:26px;border:1px solid #c9c9c9;border-radius:3px;background:#eeeeee"></div>
<div class="a" style="left:1266px;top:686px;width:102px;height:26px;border:1px solid #c9c9c9;border-radius:3px;background:#eeeeee"></div>
<div class="a" style="left:949px;top:691.1px;font-size:10.5px;font-weight:normal;color:#8a8a8a">DEM</div>
<div class="a" style="left:1057px;top:691.1px;font-size:10.5px;font-weight:normal;color:#8a8a8a">12.11.2024</div>
<svg class="a" style="left:1139px;top:690px" width="11" height="11" viewBox="0 0 11 11"><rect x="0.7" y="1.5" width="9.6" height="8.8" rx="1" fill="none" stroke="#c4c4c4" stroke-width="1.1"/><rect x="0.7" y="1.5" width="9.6" height="2" fill="#c4c4c4"/><rect x="5.5" y="6" width="2.5" height="2.5" fill="#c4c4c4"/></svg>
<svg class="a" style="left:1353px;top:690px" width="11" height="11" viewBox="0 0 11 11"><rect x="0.7" y="1.5" width="9.6" height="8.8" rx="1" fill="none" stroke="#c4c4c4" stroke-width="1.1"/><rect x="0.7" y="1.5" width="9.6" height="2" fill="#c4c4c4"/><rect x="5.5" y="6" width="2.5" height="2.5" fill="#c4c4c4"/></svg>
<div class="a" style="left:916px;top:705px;width:485px;height:26px;background:#fff"></div>
<div class="a" style="left:1370px;top:129px;width:14px;height:574px;border:1px solid #e4e4e4;border-radius:7px;background:#fff"></div>
<div class="a" style="left:1372px;top:132px;width:10px;height:567px;border-radius:5px;background:#d9d7db"></div>
<svg class="a" style="left:980px;top:415px" width="145" height="170" viewBox="980 415 145 170">
 <path d="M993 425.5 L1096 527.5 L1066.5 551.5 Z" fill="#1298f5"/>
 <circle cx="1089" cy="550.5" r="22.6" fill="#1298f5" stroke="#fff" stroke-width="1.6"/>
 <circle cx="1089" cy="550.5" r="23.3" fill="none" stroke="#222" stroke-width="1.2"/>
 <text x="1089.8" y="557.6" text-anchor="middle" font-family="Liberation Sans" font-weight="bold" font-size="17.5" letter-spacing="1.6" fill="#fff" stroke="#fff" stroke-width="0.6">11</text>
</svg>


</body></html>
